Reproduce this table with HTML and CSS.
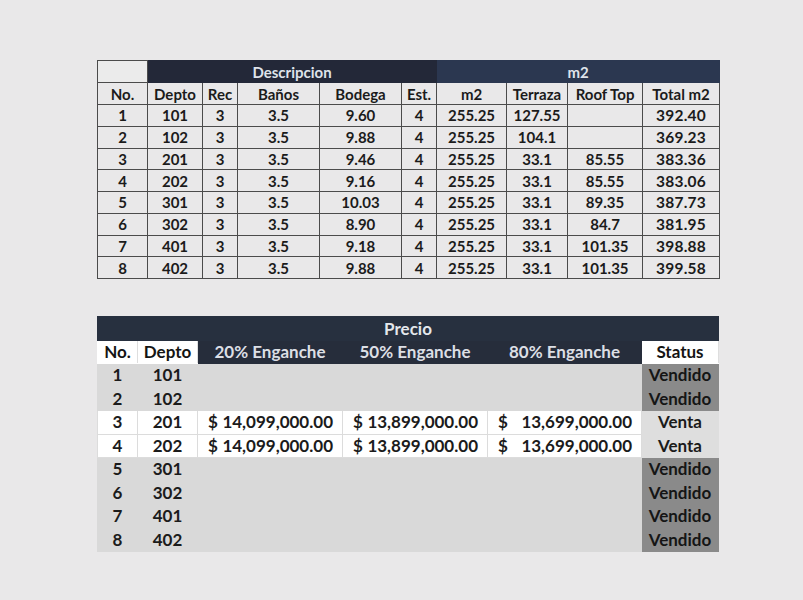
FILE: index.html
```html
<!DOCTYPE html>
<html lang="es">
<head>
<meta charset="utf-8">
<title>Departamentos</title>
<link rel="stylesheet" href="styles.css">
</head>
<body>
<div class="page">
  <table class="tbl-m2">
    <colgroup>
      <col class="c-no"><col class="c-depto"><col class="c-rec"><col class="c-banos"><col class="c-bodega"><col class="c-est">
      <col class="c-m2"><col class="c-terraza"><col class="c-roof"><col class="c-total">
    </colgroup>
    <thead>
      <tr class="group">
        <th class="blank"></th>
        <th colspan="5" class="desc">Descripcion</th>
        <th colspan="4" class="m2h">m2</th>
      </tr>
      <tr class="heads">
        <th>No.</th><th>Depto</th><th>Rec</th><th>Baños</th><th>Bodega</th><th>Est.</th>
        <th>m2</th><th>Terraza</th><th>Roof Top</th><th>Total m2</th>
      </tr>
    </thead>
    <tbody>
      <tr><td>1</td><td>101</td><td>3</td><td>3.5</td><td>9.60</td><td>4</td><td>255.25</td><td>127.55</td><td></td><td class="tot">392.40</td></tr>
      <tr><td>2</td><td>102</td><td>3</td><td>3.5</td><td>9.88</td><td>4</td><td>255.25</td><td>104.1</td><td></td><td class="tot">369.23</td></tr>
      <tr><td>3</td><td>201</td><td>3</td><td>3.5</td><td>9.46</td><td>4</td><td>255.25</td><td>33.1</td><td>85.55</td><td class="tot">383.36</td></tr>
      <tr><td>4</td><td>202</td><td>3</td><td>3.5</td><td>9.16</td><td>4</td><td>255.25</td><td>33.1</td><td>85.55</td><td class="tot">383.06</td></tr>
      <tr><td>5</td><td>301</td><td>3</td><td>3.5</td><td>10.03</td><td>4</td><td>255.25</td><td>33.1</td><td>89.35</td><td class="tot">387.73</td></tr>
      <tr><td>6</td><td>302</td><td>3</td><td>3.5</td><td>8.90</td><td>4</td><td>255.25</td><td>33.1</td><td>84.7</td><td class="tot">381.95</td></tr>
      <tr><td>7</td><td>401</td><td>3</td><td>3.5</td><td>9.18</td><td>4</td><td>255.25</td><td>33.1</td><td>101.35</td><td class="tot">398.88</td></tr>
      <tr><td>8</td><td>402</td><td>3</td><td>3.5</td><td>9.88</td><td>4</td><td>255.25</td><td>33.1</td><td>101.35</td><td class="tot">399.58</td></tr>
    </tbody>
  </table>

  <table class="tbl-precio">
    <colgroup>
      <col class="p-no"><col class="p-depto"><col class="p-20"><col class="p-50"><col class="p-80"><col class="p-status">
    </colgroup>
    <thead>
      <tr class="title"><th colspan="6">Precio</th></tr>
      <tr class="heads">
        <th class="light">No.</th><th class="light">Depto</th>
        <th class="dark">20% Enganche</th><th class="dark">50% Enganche</th><th class="dark">80% Enganche</th>
        <th class="light">Status</th>
      </tr>
    </thead>
    <tbody>
      <tr class="sold"><td>1</td><td>101</td><td></td><td></td><td></td><td class="st">Vendido</td></tr>
      <tr class="sold"><td>2</td><td>102</td><td></td><td></td><td></td><td class="st">Vendido</td></tr>
      <tr class="avail">
        <td>3</td><td>201</td>
        <td><div class="money"><span>$</span><span>14,099,000.00</span></div></td>
        <td><div class="money"><span>$</span><span>13,899,000.00</span></div></td>
        <td><div class="money"><span>$</span><span>13,699,000.00</span></div></td>
        <td class="st">Venta</td>
      </tr>
      <tr class="avail">
        <td>4</td><td>202</td>
        <td><div class="money"><span>$</span><span>14,099,000.00</span></div></td>
        <td><div class="money"><span>$</span><span>13,899,000.00</span></div></td>
        <td><div class="money"><span>$</span><span>13,699,000.00</span></div></td>
        <td class="st">Venta</td>
      </tr>
      <tr class="sold"><td>5</td><td>301</td><td></td><td></td><td></td><td class="st">Vendido</td></tr>
      <tr class="sold"><td>6</td><td>302</td><td></td><td></td><td></td><td class="st">Vendido</td></tr>
      <tr class="sold"><td>7</td><td>401</td><td></td><td></td><td></td><td class="st">Vendido</td></tr>
      <tr class="sold"><td>8</td><td>402</td><td></td><td></td><td></td><td class="st">Vendido</td></tr>
    </tbody>
  </table>
</div>
</body>
</html>
```

FILE: styles.css
```css
html, body {
  margin: 0;
  padding: 0;
  background: #e9e8e9;
}

body {
  font-family: "Lato", "Open Sans", "Liberation Sans", sans-serif;
  font-weight: 700;
  color: #1b1b1b;
  width: 803px;
  height: 600px;
  overflow: hidden;
}

.page {
  padding: 60px 0 0 97px;
  display: flex;
  flex-direction: column;
  gap: 37px;
}

table {
  border-collapse: collapse;
  table-layout: fixed;
}

th, td {
  padding: 0;
  text-align: center;
  white-space: nowrap;
  overflow: hidden;
}

/* ---------- top table ---------- */
.tbl-m2 {
  width: 622px;
  font-size: 15px;
}

.c-no { width: 50px; }
.c-depto { width: 55px; }
.c-rec { width: 35px; }
.c-banos { width: 82px; }
.c-bodega { width: 82px; }
.c-est { width: 35px; }
.c-m2 { width: 70px; }
.c-terraza { width: 61px; }
.c-roof { width: 75px; }
.c-total { width: 77px; }

.tbl-m2 th,
.tbl-m2 td {
  border: 1px solid #4b4b4b;
  height: 21px;
  line-height: 20px;
}

.tbl-m2 .blank {
  background: #ebebeb;
}

.tbl-m2 .desc {
  background: #232838;
  border-color: #232838;
  color: #dfe3ea;
}

.tbl-m2 .m2h {
  background: #2b3750;
  border-color: #2b3750;
  border-left: 1px solid #3a4660;
  color: #dfe3ea;
}

.tbl-m2 tbody td {
  height: 20.75px;
}

.tbl-m2 .tot {
  font-size: 15.5px;
  letter-spacing: 0.2px;
}

/* ---------- bottom table ---------- */
.tbl-precio {
  width: 621px;
  font-size: 17px;
}

.p-no { width: 40px; }
.p-depto { width: 60px; }
.p-20 { width: 145px; }
.p-50 { width: 145px; }
.p-80 { width: 154px; }
.p-status { width: 77px; }

.tbl-precio th,
.tbl-precio td {
  border: 1px solid transparent;
}

.tbl-precio .title th {
  background: #27303f;
  border-color: #27303f;
  color: #e4e7ec;
  height: 23px;
  line-height: 22px;
}

.tbl-precio .heads th {
  height: 22px;
  line-height: 22px;
}

.tbl-precio .heads .light {
  background: #ffffff;
  border-color: #ffffff;
  border-right-color: #dedede;
  color: #141414;
}

.tbl-precio .heads .dark {
  background: #262d3b;
  border-color: #262d3b;
  color: #dcdfe5;
}

.tbl-precio tbody td {
  height: 22.5px;
  line-height: 22px;
}

.tbl-precio .sold td {
  background: #d9d9d9;
  border-color: #d9d9d9;
}

.tbl-precio .sold .st {
  background: #8a8a8a;
  border-color: #8a8a8a;
  color: #151515;
}

.tbl-precio .avail td {
  background: #ffffff;
  border-color: #dcdcdc;
}

.tbl-precio .avail .st {
  background: #dedede;
  border-color: #dedede;
}

.money {
  display: flex;
  justify-content: space-between;
  padding: 0 9px 0 10px;
}
```
